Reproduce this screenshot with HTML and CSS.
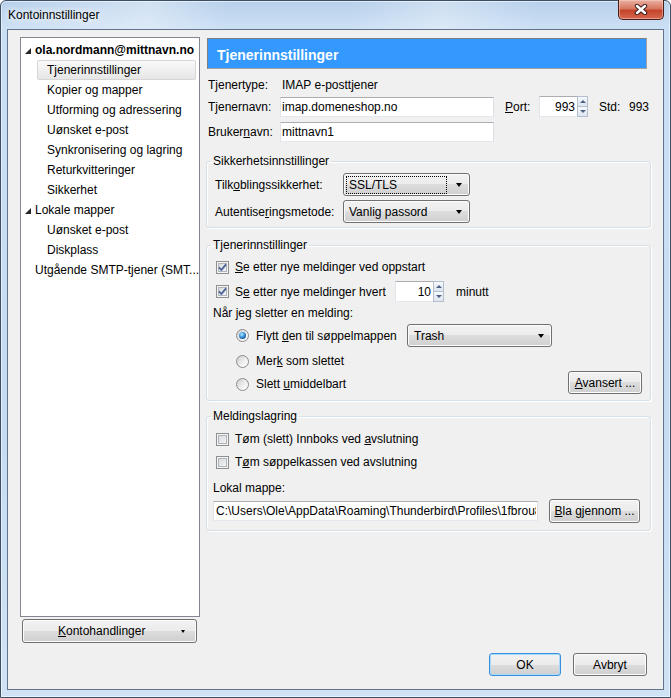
FILE: index.html
```html
<!DOCTYPE html>
<html lang="no">
<head>
    <meta charset="UTF-8">
    <meta name="viewport" content="width=device-width, initial-scale=1.0">
    <title>Kontoinnstillinger</title>
    <link rel="stylesheet" href="styles.css">
</head>
<body>
<div class="window">
    <div class="titlebar">
        <span class="title">Kontoinnstillinger</span>
        <button class="close-btn" aria-label="Lukk">
            <svg width="16" height="11" viewBox="0 0 16 11">
                <path d="M4 2 L12 9 M12 2 L4 9" stroke="#3b2020" stroke-width="4.4" stroke-linecap="round" fill="none"/>
                <path d="M4 2 L12 9 M12 2 L4 9" stroke="#fff" stroke-width="2.4" stroke-linecap="round" fill="none"/>
            </svg>
        </button>
    </div>

    <div class="client">
        <div class="main">
            <!-- Account tree -->
            <div class="sidebar">
                <ul class="tree">
                    <li class="tree-item top"><span class="twisty"><svg width="6" height="6" viewBox="0 0 6 6"><polygon points="6,0 6,6 0,6" fill="#262626"/></svg></span><b>ola.nordmann@mittnavn.no</b></li>
                    <li class="tree-item child selected">Tjenerinnstillinger</li>
                    <li class="tree-item child">Kopier og mapper</li>
                    <li class="tree-item child">Utforming og adressering</li>
                    <li class="tree-item child">Uønsket e-post</li>
                    <li class="tree-item child">Synkronisering og lagring</li>
                    <li class="tree-item child">Returkvitteringer</li>
                    <li class="tree-item child">Sikkerhet</li>
                    <li class="tree-item top"><span class="twisty"><svg width="6" height="6" viewBox="0 0 6 6"><polygon points="6,0 6,6 0,6" fill="#262626"/></svg></span>Lokale mapper</li>
                    <li class="tree-item child">Uønsket e-post</li>
                    <li class="tree-item child">Diskplass</li>
                    <li class="tree-item plain">Utgående SMTP-tjener (SMT...</li>
                </ul>
                <button class="btn account-btn"><span><u>K</u>ontohandlinger</span><span class="small-arrow"></span></button>
            </div>

            <!-- Settings page -->
            <div class="content">
                <div class="page-header">Tjenerinnstillinger</div>

                <div class="server-info">
                    <div class="info-row">
                        <span class="info-label">Tjenertype:</span>
                        <span class="info-value">IMAP e-posttjener</span>
                    </div>
                    <div class="info-row row-server">
                        <span class="info-label">Tjenernavn:</span>
                        <input class="textbox server-box" type="text" value="imap.domeneshop.no">
                        <span class="port-label"><u>P</u>ort:</span>
                        <div class="spin port-spin">
                            <input class="spin-value" type="text" value="993">
                            <div class="spin-arrows"><span class="spin-up"></span><span class="spin-down"></span></div>
                        </div>
                        <span class="std-label">Std:</span>
                        <span>993</span>
                    </div>
                    <div class="info-row row-user">
                        <span class="info-label">Bruker<u>n</u>avn:</span>
                        <input class="textbox server-box" type="text" value="mittnavn1">
                    </div>
                </div>

                <fieldset class="group group-security">
                    <legend>Sikkerhetsinnstillinger</legend>
                    <div class="field-row">
                        <span class="field-label">Tilk<u>o</u>blingssikkerhet:</span>
                        <div class="combo combo-security"><span class="combo-text focused">SSL/TLS</span><span class="combo-arrow"></span></div>
                    </div>
                    <div class="field-row second">
                        <span class="field-label">Autentise<u>r</u>ingsmetode:</span>
                        <div class="combo combo-security"><span class="combo-text">Vanlig passord</span><span class="combo-arrow"></span></div>
                    </div>
                </fieldset>

                <fieldset class="group group-server">
                    <legend>Tjenerinnstillinger</legend>
                    <div class="check-row">
                        <span class="checkbox"><svg width="9" height="9" viewBox="0 0 9 9"><path d="M1 4.4 L3.4 7 L8 1.4" fill="none" stroke="#4a5f97" stroke-width="1.8"/></svg></span>
                        <span><u>S</u>e etter nye meldinger ved oppstart</span>
                    </div>
                    <div class="check-row interval-row">
                        <span class="check-label">
                            <span class="checkbox"><svg width="9" height="9" viewBox="0 0 9 9"><path d="M1 4.4 L3.4 7 L8 1.4" fill="none" stroke="#4a5f97" stroke-width="1.8"/></svg></span>
                            <span>S<u>e</u> etter nye meldinger hvert</span>
                        </span>
                        <div class="spin minute-spin">
                            <input class="spin-value" type="text" value="10">
                            <div class="spin-arrows"><span class="spin-up"></span><span class="spin-down"></span></div>
                        </div>
                        <span class="unit">minutt</span>
                    </div>
                    <div class="text-row">Når jeg sletter en melding:</div>
                    <div class="radio-row first">
                        <span class="radio-label"><span class="radio checked"></span><span>Flytt <u>d</u>en til søppelmappen</span></span>
                        <div class="combo combo-trash"><span class="combo-text">Trash</span><span class="combo-arrow"></span></div>
                    </div>
                    <div class="radio-row second">
                        <span class="radio-label"><span class="radio"></span><span>Mer<u>k</u> som slettet</span></span>
                    </div>
                    <div class="radio-row third">
                        <span class="radio-label"><span class="radio"></span><span>Slett <u>u</u>middelbart</span></span>
                        <button class="btn advanced-btn"><u>A</u>vansert ...</button>
                    </div>
                </fieldset>

                <fieldset class="group group-storage">
                    <legend>Meldingslagring</legend>
                    <div class="check-row">
                        <span class="checkbox"></span>
                        <span>Tøm (slett) Innboks ved <u>a</u>vslutning</span>
                    </div>
                    <div class="check-row trash-row">
                        <span class="checkbox"></span>
                        <span>T<u>ø</u>m søppelkassen ved avslutning</span>
                    </div>
                    <div class="text-row folder-label">Lokal mappe:</div>
                    <div class="path-row">
                        <input class="textbox path-box" type="text" value="C:\Users\Ole\AppData\Roaming\Thunderbird\Profiles\1fbrou8v.default\ImapMail\imap.domeneshop.no">
                        <button class="btn browse-btn"><u>B</u>la gjennom ...</button>
                    </div>
                </fieldset>
            </div>
        </div>

        <div class="footer">
            <button class="btn default ok-btn">OK</button>
            <button class="btn cancel-btn">Avbryt</button>
        </div>
    </div>
</div>
</body>
</html>
```

FILE: styles.css
```css
/* Global */
* {
    box-sizing: border-box;
}

body {
    margin: 0;
    width: 671px;
    height: 698px;
    overflow: hidden;
    font-family: "Liberation Sans", Arial, sans-serif;
    font-size: 12px;
    color: #000;
    background: #fff;
}

u {
    text-underline-offset: 1px;
}

/* Window frame */
.window {
    width: 671px;
    height: 698px;
    display: flex;
    flex-direction: column;
    border: 1px solid #3d4f64;
    border-radius: 6px 6px 0 0;
    background:
        linear-gradient(100deg, rgba(255, 255, 255, 0) 0%, rgba(255, 255, 255, 0.35) 22%, rgba(255, 255, 255, 0) 34%, rgba(255, 255, 255, 0) 52%, rgba(255, 255, 255, 0.3) 66%, rgba(255, 255, 255, 0) 80%) top / 100% 29px no-repeat,
        linear-gradient(#b7d0eb, #cbdff4 26px, #c6dbf2 60%, #d0e3f6);
    box-shadow: inset 0 0 0 1px rgba(255, 255, 255, 0.55);
}

.titlebar {
    height: 28px;
    flex-shrink: 0;
    display: flex;
    align-items: flex-start;
}

.title {
    padding: 7px 0 0 7px;
    line-height: 15px;
    text-shadow: 0 0 6px #fff, 0 0 10px rgba(255, 255, 255, 0.9);
}

.close-btn {
    margin: -1px 6px 0 auto;
    width: 46px;
    height: 20px;
    padding: 0;
    border: 1px solid #4a1d14;
    border-top: none;
    border-radius: 0 0 5px 5px;
    background: linear-gradient(#eab1a3, #d8775f 45%, #c4432a 55%, #d4694f);
    box-shadow: inset 0 0 0 1px rgba(255, 220, 210, 0.45);
    display: flex;
    justify-content: center;
    align-items: center;
}

/* Client area */
.client {
    flex: 1;
    margin: 0 6px 7px 6px;
    border: 1px solid #62738a;
    background: #f0f0f0;
    padding: 7px 12px 13px 12px;
    display: flex;
    flex-direction: column;
}

.main {
    flex: 1;
    display: flex;
    gap: 6px;
}

/* Tree */
.sidebar {
    width: 180px;
    display: flex;
    flex-direction: column;
}

.tree {
    flex: 1;
    margin: 0;
    padding: 2px 0;
    list-style: none;
    border: 1px solid #828790;
    background: #fff;
}

.tree-item {
    height: 20px;
    line-height: 20px;
    white-space: nowrap;
    overflow: hidden;
}

.tree-item.top {
    display: flex;
    align-items: center;
    padding-left: 4px;
}

.twisty {
    width: 10px;
    display: flex;
    align-items: center;
    padding-top: 2px;
}

.tree-item.child {
    margin: 0 3px 0 16px;
    padding-left: 9px;
    line-height: 18px;
    border: 1px solid transparent;
    border-radius: 2px;
}

.tree-item.selected {
    border-color: #d6d6d6;
    background: linear-gradient(#f9f9f9, #e6e6e6);
}

.tree-item.plain {
    padding-left: 14px;
}

/* Buttons */
.btn {
    font: inherit;
    color: #000;
    height: 23px;
    padding: 0;
    border: 1px solid #707070;
    border-radius: 3px;
    background: linear-gradient(#f2f2f2 0%, #ebebeb 50%, #dddddd 50%, #cfcfcf 100%);
    box-shadow: inset 0 0 0 1px #fcfcfc;
}

.btn.default {
    border-color: #3a8ee0;
    box-shadow: inset 0 0 0 1px #a6dcf8;
}

.account-btn {
    height: 24px;
    margin: 2px 3px 0 2px;
    padding: 0 11px 0 35px;
    display: flex;
    align-items: center;
    justify-content: space-between;
}

.small-arrow {
    width: 0;
    height: 0;
    border-left: 2.5px solid transparent;
    border-right: 2.5px solid transparent;
    border-top: 3px solid #000;
}

/* Right side */
.content {
    width: 445px;
    display: flex;
    flex-direction: column;
}

.page-header {
    margin: 1px 4px 0 1px;
    height: 31px;
    padding: 2px 0 0 9px;
    display: flex;
    align-items: center;
    background: #3399ff;
    border: 1px solid;
    border-color: #7f7f7f #a3a3a3 #a3a3a3 #7f7f7f;
    color: #fff;
    font-size: 14px;
    font-weight: bold;
}

.server-info {
    margin-top: 6px;
    padding-left: 2px;
}

.info-row {
    height: 20px;
    display: flex;
    align-items: center;
}

.info-row.row-server {
    height: 21px;
    margin-top: 1px;
}

.info-row.row-user {
    margin-top: 5px;
}

.info-label {
    width: 72px;
}

.info-value {
    padding-left: 2px;
}

.textbox {
    font: inherit;
    color: #000;
    height: 20px;
    margin: 0;
    padding: 0 1px;
    border: 1px solid;
    border-color: #abadb3 #dbdfe6 #e3e9ef #e2e3ea;
    background: #fff;
    outline: none;
}

.server-box {
    width: 214px;
}

.port-label {
    margin-left: 11px;
    width: 34px;
}

.std-label {
    margin-left: 11px;
    width: 30px;
}

/* Spin boxes */
.spin {
    display: flex;
    height: 21px;
}

.spin-value {
    font: inherit;
    color: #000;
    width: 38px;
    height: 21px;
    margin: 0;
    padding: 0 2px 0 0;
    text-align: right;
    border: 1px solid;
    border-color: #abadb3 #dbdfe6 #e3e9ef #e2e3ea;
    border-right: none;
    background: #fff;
    outline: none;
}

.spin-arrows {
    width: 11px;
    display: flex;
    flex-direction: column;
}

.spin-arrows span {
    flex: 1;
    display: flex;
    justify-content: center;
    align-items: center;
    border: 1px solid #b4bfcd;
    background: linear-gradient(#f7f9fc, #dde5ef);
}

.spin-arrows .spin-down {
    border-top: none;
}

.spin-up::after,
.spin-down::after {
    content: "";
    width: 0;
    height: 0;
    border-left: 3px solid transparent;
    border-right: 3px solid transparent;
}

.spin-up::after {
    border-bottom: 3px solid #4d6185;
}

.spin-down::after {
    border-top: 3px solid #4d6185;
}

/* Group boxes */
.group {
    margin: 0;
    min-width: 0;
    border: 1px solid #d5dfe5;
    border-radius: 3px;
    box-shadow: inset 1px 1px 0 #fff, 1px 1px 0 #fff;
    padding: 5px 8px 4px 6px;
}

.group legend {
    height: 14px;
    line-height: 14px;
    padding: 0 2px;
    margin-left: -2px;
}

.group-security {
    margin-top: 12px;
}

.group-server {
    margin-top: 10px;
    padding-bottom: 6px;
}

.group-storage {
    margin-top: 8px;
    padding-top: 6px;
    padding-bottom: 7px;
}

.field-row {
    height: 23px;
    display: flex;
    align-items: center;
}

.field-row.second {
    margin-top: 4px;
}

.field-label {
    width: 130px;
    padding-left: 2px;
}

/* Combo boxes */
.combo {
    height: 23px;
    display: flex;
    align-items: center;
    justify-content: space-between;
    padding: 0 4px 0 2px;
    border: 1px solid #707070;
    border-radius: 3px;
    background: linear-gradient(#f2f2f2 0%, #ebebeb 50%, #dddddd 50%, #cfcfcf 100%);
    box-shadow: inset 0 0 0 1px #fcfcfc;
}

.combo-security {
    width: 127px;
}

.combo-trash {
    width: 145px;
    padding-left: 3px;
}

.combo-text {
    flex: 1;
    height: 18px;
    line-height: 17px;
    padding-left: 2px;
    border: 1px solid transparent;
}

.combo-text.focused {
    border: 1px dotted #000;
    margin-right: 9px;
}

.combo-arrow {
    width: 0;
    height: 0;
    margin-right: 3px;
    border-left: 3.5px solid transparent;
    border-right: 3.5px solid transparent;
    border-top: 4px solid #000;
}

/* Check boxes and radios */
.check-row {
    height: 20px;
    display: flex;
    align-items: center;
    gap: 6px;
    padding-left: 3px;
}

.check-row.interval-row {
    height: 21px;
    margin-top: 4px;
    gap: 0;
}

.check-label {
    width: 179px;
    display: flex;
    align-items: center;
    gap: 6px;
}

.unit {
    margin-left: 12px;
}

.check-row.trash-row {
    margin-top: 3px;
}

.checkbox {
    width: 13px;
    height: 13px;
    flex-shrink: 0;
    display: flex;
    justify-content: center;
    align-items: center;
    border: 1px solid #8e8f8f;
    background: linear-gradient(135deg, #d2d5da, #f9f9fa);
    box-shadow: inset 0 0 0 1px #f4f4f4, inset 0 0 0 2px #b0b5bc;
}

.text-row {
    height: 20px;
    line-height: 20px;
    margin-top: 1px;
}

.text-row.folder-label {
    margin-top: 6px;
}

.radio-row {
    display: flex;
    align-items: center;
    padding-left: 23px;
}

.radio-row.first {
    height: 23px;
    margin-top: 1px;
}

.radio-row.second {
    height: 20px;
    margin-top: 4px;
}

.radio-row.third {
    height: 23px;
}

.radio-row.third .radio-label {
    align-self: flex-end;
    height: 20px;
}

.radio-label {
    width: 171px;
    display: flex;
    align-items: center;
    gap: 7px;
}

.radio {
    width: 13px;
    height: 13px;
    flex-shrink: 0;
    display: flex;
    justify-content: center;
    align-items: center;
    border: 1px solid #8b8b8b;
    border-radius: 50%;
    background: linear-gradient(135deg, #cfcfcf, #f6f6f6 70%, #ffffff);
}

.radio.checked::after {
    content: "";
    width: 7px;
    height: 7px;
    border-radius: 50%;
    background: radial-gradient(circle at 40% 35%, #c6ecff 0, #58b0ec 30%, #1e66b0 65%, #0d3a6b 100%);
}

.advanced-btn {
    margin-left: auto;
    width: 74px;
}

.path-row {
    height: 24px;
    margin-top: 1px;
    display: flex;
    align-items: center;
}

.path-box {
    width: 325px;
    padding: 0 1px 0 2px;
}

.browse-btn {
    margin-left: 11px;
    width: 91px;
    height: 24px;
}

/* Dialog buttons */
.footer {
    height: 23px;
    margin-top: 10px;
    padding-right: 4px;
    display: flex;
    justify-content: flex-end;
    gap: 12px;
}

.ok-btn {
    width: 72px;
}

.cancel-btn {
    width: 74px;
}
```
